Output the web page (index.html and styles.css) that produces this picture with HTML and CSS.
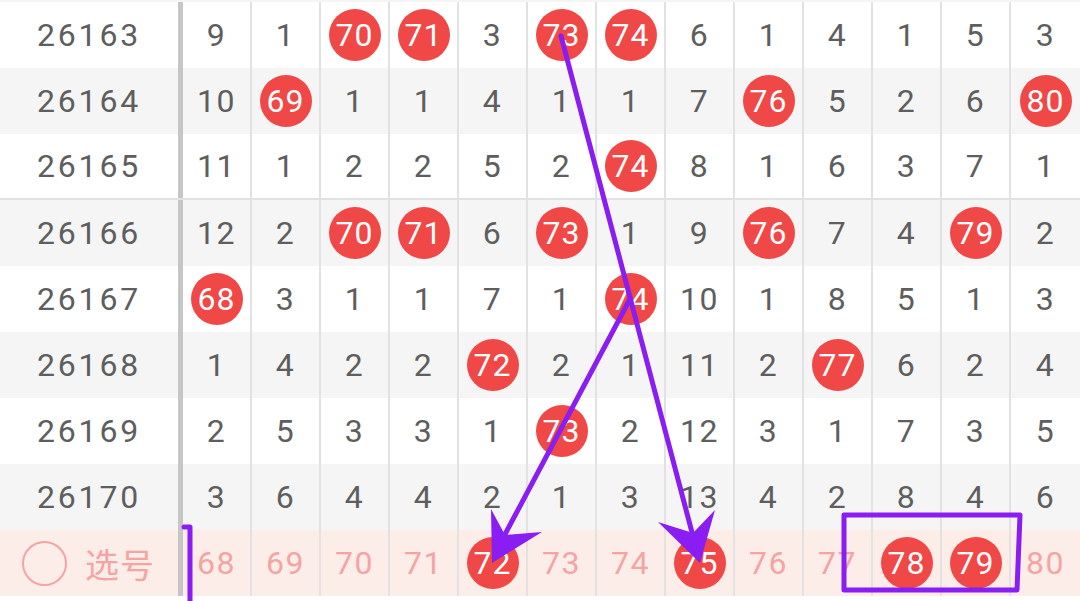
FILE: index.html
```
<!DOCTYPE html>
<html lang="zh">
<head>
  <meta charset="UTF-8">
  <meta name="viewport" content="width=device-width, initial-scale=1">
  <title>走势图</title>
  <link rel="stylesheet" href="styles.css">
</head>
<body>

<div class="board">
  <!-- tail of the previous row, scrolled out of view -->
  <div class="row-tail"></div>

  <div class="row">
    <div class="period">26163</div>
    <div class="cell">9</div><div class="cell">1</div><div class="cell"><span class="ball">70</span></div><div class="cell"><span class="ball">71</span></div><div class="cell">3</div><div class="cell"><span class="ball">73</span></div><div class="cell"><span class="ball">74</span></div><div class="cell">6</div><div class="cell">1</div><div class="cell">4</div><div class="cell">1</div><div class="cell">5</div><div class="cell">3</div>
  </div>

  <div class="row alt">
    <div class="period">26164</div>
    <div class="cell">10</div><div class="cell"><span class="ball">69</span></div><div class="cell">1</div><div class="cell">1</div><div class="cell">4</div><div class="cell">1</div><div class="cell">1</div><div class="cell">7</div><div class="cell"><span class="ball">76</span></div><div class="cell">5</div><div class="cell">2</div><div class="cell">6</div><div class="cell"><span class="ball">80</span></div>
  </div>

  <div class="row group-end">
    <div class="period">26165</div>
    <div class="cell">11</div><div class="cell">1</div><div class="cell">2</div><div class="cell">2</div><div class="cell">5</div><div class="cell">2</div><div class="cell"><span class="ball">74</span></div><div class="cell">8</div><div class="cell">1</div><div class="cell">6</div><div class="cell">3</div><div class="cell">7</div><div class="cell">1</div>
  </div>

  <div class="row alt">
    <div class="period">26166</div>
    <div class="cell">12</div><div class="cell">2</div><div class="cell"><span class="ball">70</span></div><div class="cell"><span class="ball">71</span></div><div class="cell">6</div><div class="cell"><span class="ball">73</span></div><div class="cell">1</div><div class="cell">9</div><div class="cell"><span class="ball">76</span></div><div class="cell">7</div><div class="cell">4</div><div class="cell"><span class="ball">79</span></div><div class="cell">2</div>
  </div>

  <div class="row">
    <div class="period">26167</div>
    <div class="cell"><span class="ball">68</span></div><div class="cell">3</div><div class="cell">1</div><div class="cell">1</div><div class="cell">7</div><div class="cell">1</div><div class="cell"><span class="ball">74</span></div><div class="cell">10</div><div class="cell">1</div><div class="cell">8</div><div class="cell">5</div><div class="cell">1</div><div class="cell">3</div>
  </div>

  <div class="row alt">
    <div class="period">26168</div>
    <div class="cell">1</div><div class="cell">4</div><div class="cell">2</div><div class="cell">2</div><div class="cell"><span class="ball">72</span></div><div class="cell">2</div><div class="cell">1</div><div class="cell">11</div><div class="cell">2</div><div class="cell"><span class="ball">77</span></div><div class="cell">6</div><div class="cell">2</div><div class="cell">4</div>
  </div>

  <div class="row">
    <div class="period">26169</div>
    <div class="cell">2</div><div class="cell">5</div><div class="cell">3</div><div class="cell">3</div><div class="cell">1</div><div class="cell"><span class="ball">73</span></div><div class="cell">2</div><div class="cell">12</div><div class="cell">3</div><div class="cell">1</div><div class="cell">7</div><div class="cell">3</div><div class="cell">5</div>
  </div>

  <div class="row alt">
    <div class="period">26170</div>
    <div class="cell">3</div><div class="cell">6</div><div class="cell">4</div><div class="cell">4</div><div class="cell">2</div><div class="cell">1</div><div class="cell">3</div><div class="cell">13</div><div class="cell">4</div><div class="cell">2</div><div class="cell">8</div><div class="cell">4</div><div class="cell">6</div>
  </div>

  <!-- 选号 -->
  <div class="row pick">
    <div class="period pick-label"><span class="radio"></span><span>选号</span></div>
    <div class="cell">68</div><div class="cell">69</div><div class="cell">70</div><div class="cell">71</div><div class="cell"><span class="ball">72</span></div><div class="cell">73</div><div class="cell">74</div><div class="cell"><span class="ball">75</span></div><div class="cell">76</div><div class="cell">77</div><div class="cell"><span class="ball">78</span></div><div class="cell"><span class="ball">79</span></div><div class="cell">80</div>
  </div>

  <!-- hand-drawn marks -->
  <svg class="marks" width="1080" height="601" viewBox="0 0 1080 601">
    <g fill="none" stroke="#8a1df2" stroke-width="5" stroke-linecap="round" stroke-linejoin="round">
      <line x1="561" y1="36" x2="694" y2="540"/>
      <line x1="630" y1="299" x2="502" y2="540"/>
      <polygon points="844,515 1020,515 1017,590 844,590"/>
      <polyline points="184,527 190,527 190,601"/>
    </g>
    <g fill="#8a1df2">
      <polygon points="700,563 658,522 693,533 715,510"/>
      <polygon points="492,563 491,509 505,535 542,532"/>
    </g>
  </svg>
</div>

</body>
</html>
```

FILE: styles.css
```
body {
  margin: 0;
  background: #fff;
  font-family: Roboto, "Noto Sans CJK SC", sans-serif;
  overflow: hidden;
}

.board {
  position: relative;
  width: 1080px;
  height: 601px;
  overflow: hidden;
}

.row-tail {
  height: 2px;
  background: #f5f5f5;
}

.row {
  display: flex;
  height: 66px;
  background: #fff;
  box-sizing: border-box;
}

.row.alt {
  background: #f5f5f5;
}

.row.group-end {
  border-bottom: 2px solid #e2e2e2;
}

.row.pick {
  background: #fdede8;
}

.period {
  width: 178px;
  flex: none;
  border-right: 5px solid #c6c6c6;
  display: flex;
  align-items: center;
  justify-content: center;
  font-size: 32px;
  letter-spacing: 2.8px;
  color: #5e5e5e;
}

.cell {
  width: 69px;
  flex: none;
  box-sizing: border-box;
  border-right: 2px solid #e2e2e2;
  display: flex;
  align-items: center;
  justify-content: center;
  font-size: 32px;
  letter-spacing: 1.5px;
  color: #5e5e5e;
}

.cell:last-child {
  border-right: none;
}

.ball {
  width: 52px;
  height: 52px;
  border-radius: 50%;
  background: #f04747;
  color: #fff;
  display: flex;
  align-items: center;
  justify-content: center;
  letter-spacing: 1px;
}

.pick .cell {
  color: #f3a4a4;
}

.pick .ball {
  color: #fff;
}

.pick-label {
  justify-content: flex-start;
  gap: 18px;
  padding-left: 22px;
  box-sizing: border-box;
  width: 183px;
  color: #f3a4a4;
  font-size: 34px;
  letter-spacing: 1px;
}

.radio {
  width: 41px;
  height: 41px;
  border: 2px solid #f3a4a4;
  border-radius: 50%;
}

.marks {
  position: absolute;
  left: 0;
  top: 0;
}
```
